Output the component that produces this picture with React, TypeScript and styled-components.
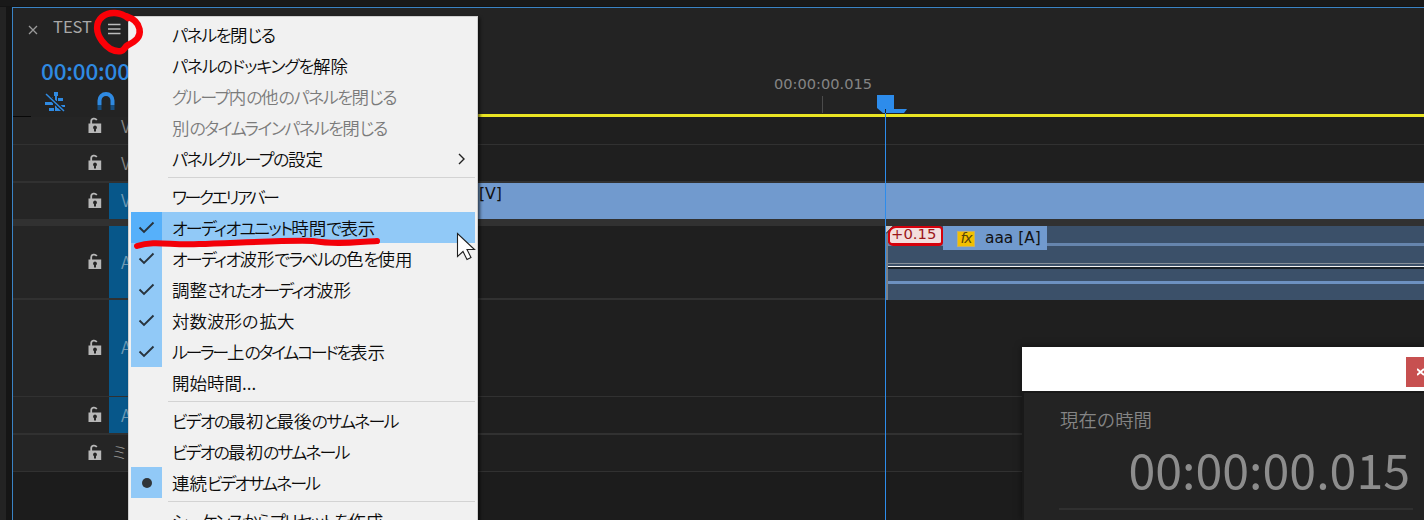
import React from "react";
import styled, { createGlobalStyle } from "styled-components";

const Global = createGlobalStyle`
  *{box-sizing:border-box}
  html,body{margin:0;background:#1c1c1c}
  body{width:1424px;height:520px;overflow:hidden;font-family:"Noto Sans CJK JP",sans-serif}
  svg{display:block}
`;

const Shell = styled.div`
  position: relative; width: 1424px; height: 520px; overflow: hidden;
  display: flex; flex-direction: column; background: #151515;
`;
const TopBar = styled.div`
  height: 7px; flex: none; padding-left: 7px; background: #191919; border-bottom: 1px solid #141414;
`;
const Body = styled.div`flex: 1; display: flex; min-height: 0;`;
const SideStrip = styled.div`width: 6px; margin-right: 6px; background: #232323;`;
const Panel = styled.main`
  position: relative; flex: 1; min-width: 0; display: flex; flex-direction: column;
  border: solid #3a83c4; border-width: 1px 0 0 1px; background: #1c1c1c;
`;
const PanelHead = styled.header`height: 109px; flex: none; display: flex; background: #232323;`;
const HeadLeft = styled.div`width: 465px; padding-left: 15px; display: flex; flex-direction: column;`;
const HeadEdge = styled.i`width: 18px; height: 1px; margin: auto 0 0 -15px; background: #080808;`;
const TabRow = styled.div`
  display: flex; align-items: center; height: 42px; color: #a8a8a8;
  svg:first-child{margin-top:1px}
`;
const TabName = styled.span`
  margin: -6px 0 0 15px; width: 55px; font: 16.5px/22px "Noto Sans CJK JP", sans-serif;
`;
const Timecode = styled.div`
  margin: 6px 0 0 13px; height: 28px; color: #2f8ae2; font: 500 22.5px/28px "Noto Sans CJK JP", sans-serif;
  letter-spacing: -0.2px;
`;
const Tools = styled.div`display: flex; gap: 30px; padding: 7px 0 0 15px;`;
const Ruler = styled.div`flex: 1; display: flex; flex-direction: column; align-items: flex-start;`;
const RulerTime = styled.span`
  margin: 66px 0 0 296px; width: 102px; color: #858585; font: 14.6px/20px "DejaVu Sans", sans-serif;
`;
const Tick = styled.i`width: 1px; height: 17px; margin: 2px 0 0 344px; background: #4b4b4b;`;
const WorkBar = styled.div`
  height: 3px; flex: none; margin: -3px 0 0 465px; background: #e9e423; z-index: 1;
`;
const Track = styled.div<{ $h: number; $line: number }>`
  height: ${p => p.$h}px; flex: none; display: flex;
  border-bottom: ${p => p.$line}px solid #313131;
`;
const TrackHead = styled.div<{ $lift: number }>`
  width: 465px; flex: none; padding: 0 0 ${p => p.$lift}px 75px; display: flex; align-items: center; background: #252525;
`;
const Target = styled.div<{ $on?: boolean; $lift: number }>`
  width: 80px; align-self: stretch; margin: 0 0 -${p => p.$lift}px 7px; padding: 0 0 ${p => p.$lift}px 12px;
  display: flex; align-items: center;
  color: ${p => (p.$on ? "#6f9bb5" : "#858585")}; background: ${p => (p.$on ? "#07578a" : "none")};
  font: 350 17px "Noto Sans CJK JP", sans-serif;
`;
const MixName = styled.span`margin-left: 9px; color: #999; font: 300 17px "Noto Sans CJK JP", sans-serif;`;
const Lane = styled.div`flex: 1; display: flex; background: #1f1f1f; min-width: 0;`;
const VideoClip = styled.div`
  flex: 1; background: #719ace; color: #111; padding-left: 1px; font: 15.7px/22px "DejaVu Sans", sans-serif;
`;
const AudioClip = styled.div`
  flex: 1; margin-left: 408px; height: 74px; display: flex; flex-direction: column; background: #3b5069;
  border-left: 2px solid #78818b; position: relative;
`;
const Wave = styled.i<{ $top: number; $h: number; $c: string }>`
  display: block; height: ${p => p.$h}px; margin-top: ${p => p.$top}px; background: ${p => p.$c};
`;
const ClipTags = styled.div`
  position: absolute; left: 0; top: 0; display: flex; font: 15px/22px "DejaVu Sans", sans-serif;
`;
const Offset = styled.span`
  width: 55px; height: 20px; border: 2px solid #d5000b; border-bottom-width: 3px; border-radius: 8px 4px 4px 5px;
  background: #f3dedd; color: #9c1719; font-size: 14.8px; line-height: 12px; padding-left: 1px;
`;
const ClipName = styled.span`
  width: 104px; height: 24px; display: flex; align-items: center; padding: 0 0 1px 14px; gap: 10px;
  background: #719ace; color: #111; font-size: 15.4px;
`;
const Fx = styled.b`
  width: 18px; height: 16px; margin-top: 3px; border: 1px solid #c3b169; background: #f2c000; color: #55430b;
  font: italic 14px/12px "DejaVu Sans", sans-serif; text-align: center; letter-spacing: -1px;
`;
const Fold = styled.svg`position: absolute; left: -2px; top: 0;`;
const Playhead = styled.svg`position: absolute; left: 863px; top: 87px; z-index: 2;`;

const Menu = styled.div`
  position: absolute; left: 128px; top: 16px; width: 350px; height: 520px; z-index: 3;
  padding: 2px 2px 0; background: #f1f1f1; border: 1px solid #cfcfcf;
  box-shadow: 2px 2px 3px rgba(0,0,0,.6);
`;
const Item = styled.div<{ $active?: boolean; $off?: boolean }>`
  height: 31px; display: flex; align-items: center;
  background: ${p => (p.$active ? "#91c9f7" : "none")}; color: ${p => (p.$off ? "#7b7b7b" : "#0b0b0b")};
`;
const Mark = styled.span<{ $on?: boolean; $active?: boolean }>`
  width: 31px; height: 31px; flex: none; display: grid; place-items: center;
  background: ${p => (p.$active ? "#56b0fa" : p.$on ? "#91c9f7" : "none")};
`;
const Label = styled.span<{ $kern: number }>`
  flex: 1; margin-left: 10px; white-space: nowrap; font-size: 17.5px; line-height: 31px; font-weight: 350;
  padding-bottom: 1px;
  .kana { font-size: 17px; font-feature-settings: "palt"; letter-spacing: ${p => p.$kern}px; }
`;
const Divider = styled.div`height: 1px; margin: 3px 0 3px 37px; background: #d3d3d3;`;

const Dialog = styled.section`
  position: absolute; left: 1022px; top: 347px; width: 402px; height: 173px; z-index: 4;
  background: #232323; box-shadow: 0 0 7px rgba(0,0,0,.5);
`;
const TitleBar = styled.div`
  height: 44px; display: flex; justify-content: flex-end; align-items: center; padding-top: 6px; background: #fff;
`;
const CloseBox = styled.div`width: 18px; height: 30px; overflow: hidden; padding: 11px 0 0 11px; background: #c75050;`;
const DialogBody = styled.div`
  height: 129px; border: solid #191919; border-width: 2px 0 0 2px; padding: 14px 11px 0 35px;
`;
const Caption = styled.div`padding-left: 1px; color: #858585; font-size: 18.4px; line-height: 24px; font-weight: 350;`;
const BigTime = styled.div`
  height: 79px; padding: 7px 3px 0 0; text-align: right; white-space: nowrap; color: #8d8d8d;
  font-size: 48.3px; line-height: 60px; font-weight: 400; border-bottom: 2px solid #303030;
`;
const Overlay = styled.svg`position: absolute; left: 0; top: 0; z-index: 5; pointer-events: none;`;

const Lock = () => (
  <svg width="14" height="18" viewBox="0 0 14 18">
    <path d="M3.2 8V5.2C3.2 2.4 7 1.6 8.8 4" fill="none" stroke="#b7b7b7" strokeWidth="1.8" />
    <path fill="#b7b7b7" fillRule="evenodd" d="M.5 7.500h12.700V17H.5zM7 9.500a2 2 0 0 0-1 3.700V15.500h2V13.200a2 2 0 0 0-1-3.700z" />
  </svg>
);
const Snap = () => (
  <svg width="24" height="22" viewBox="0 0 24 22" fill="#2f8ae2">
    <path d="M11 1h4v4h-1v5h-2V5h-1zM6 6h4v3H6zM15 7h5v3h-5zM2 11h8v3H2zM17 14h5v2h-5zM6 17h5v3H6zM12 13h2v7h-2zM14 17h4v3h-4z" />
    <path d="M3 3l18 17" stroke="#232323" strokeWidth="4" />
    <path d="M3 3l18 17" stroke="#2f8ae2" strokeWidth="1.500" />
  </svg>
);
const Magnet = () => (
  <svg width="18" height="20" viewBox="0 0 18 20" fill="none" strokeWidth="4">
    <path d="M2.500 14V9.500a6.500 6.500 0 0 1 13 0V14" stroke="#2f8ae2" />
    <path d="M2.500 14v5M15.500 14v5" stroke="#174e80" />
  </svg>
);
const Check = () => (
  <svg width="17" height="13" viewBox="0 0 17 13"><path d="M1.500 6.500l4.500 4.500L15.500 1.500" fill="none" stroke="#28333d" strokeWidth="1.900" /></svg>
);

type Entry = { text: string; kern?: number; mark?: "check" | "dot"; off?: boolean; active?: boolean; sub?: boolean };
const groups: Entry[][] = [
  [
    { text: "パネルを閉じる", kern: -1.5 },
    { text: "パネルのドッキングを解除", kern: -1.2 },
    { text: "グループ内の他のパネルを閉じる", kern: -1.5, off: true },
    { text: "別のタイムラインパネルを閉じる", kern: -1.55, off: true },
    { text: "パネルグループの設定", kern: -1.4, sub: true },
  ],
  [
    { text: "ワークエリアバー", kern: -2.5 },
    { text: "オーディオユニット時間で表示", kern: -1.7, mark: "check", active: true },
    { text: "オーディオ波形でラベルの色を使用", kern: -1.7, mark: "check" },
    { text: "調整されたオーディオ波形", kern: -1.9, mark: "check" },
    { text: "対数波形の拡大", kern: 1, mark: "check" },
    { text: "ルーラー上のタイムコードを表示", kern: -2.3, mark: "check" },
    { text: "開始時間..." },
  ],
  [
    { text: "ビデオの最初と最後のサムネール", kern: -1.8 },
    { text: "ビデオの最初のサムネール", kern: -1.9 },
    { text: "連続ビデオサムネール", kern: -1.95, mark: "dot" },
  ],
  [{ text: "シーケンスからプリセットを作成", kern: -1.6 }],
];

const MenuItem = ({ e }: { e: Entry }) => (
  <Item $active={e.active} $off={e.off}>
    <Mark $on={!!e.mark} $active={e.active}>
      {e.mark === "check" && <Check />}
      {e.mark === "dot" && <svg width="10" height="10"><circle cx="5" cy="5" r="5" fill="#303539" /></svg>}
    </Mark>
    <Label $kern={e.kern ?? -1}>
      {e.text.split(/([\u3040-\u30ff]+)/).map((run, i) => (i % 2 ? <span className="kana" key={i}>{run}</span> : run))}
    </Label>
    {e.sub && (
      <svg width="18" height="12" viewBox="0 0 18 12"><path d="M2 1l5 5-5 5" fill="none" stroke="#222" strokeWidth="1.400" /></svg>
    )}
  </Item>
);

type TrackProps = { h: number; line: number; name: string; on?: boolean; mix?: boolean; lift?: number; children?: React.ReactNode };
const TrackRow = ({ h, line, name, on, mix, lift = 2, children }: TrackProps) => (
  <Track $h={h} $line={line}>
    <TrackHead $lift={lift}>
      <Lock />
      {mix ? <MixName>{name}</MixName> : <Target $on={on} $lift={lift}>{name}</Target>}
    </TrackHead>
    <Lane>{children}</Lane>
  </Track>
);

export default function App() {
  return (
    <Shell>
      <Global />
      <TopBar />
      <Body>
        <SideStrip />
        <Panel>
          <PanelHead>
            <HeadLeft>
              <TabRow>
                <svg width="10" height="10" viewBox="0 0 10 10"><path d="M1 1l8 8M9 1L1 9" stroke="#9a9a9a" strokeWidth="1.300" /></svg>
                <TabName>TEST</TabName>
                <svg width="13" height="12" viewBox="0 0 13 12"><path d="M0 1.500h12.500M0 6h12.500M0 10.500h12.500" stroke="#bcbcbc" strokeWidth="1.300" /></svg>
              </TabRow>
              <Timecode>00:00:00.015</Timecode>
              <Tools><Snap /><Magnet /></Tools>
              <HeadEdge />
            </HeadLeft>
            <Ruler><RulerTime>00:00:00.015</RulerTime><Tick /></Ruler>
          </PanelHead>
          <WorkBar />
          <TrackRow h={28} line={1} name="V" lift={11} />
          <TrackRow h={38} line={2} name="V" />
          <TrackRow h={43} line={7} name="V" on lift={3}><VideoClip>[V]</VideoClip></TrackRow>
          <TrackRow h={74} line={2} name="A" on>
            <AudioClip>
              <Wave $top={17} $h={3} $c="#6685ad" />
              <Wave $top={17} $h={1} $c="#87909a" />
              <Wave $top={2} $h={1} $c="#f4f4f4" />
              <Wave $top={0} $h={2} $c="#192129" />
              <Wave $top={12} $h={3} $c="#6d91c1" />
              <Fold width="8" height="8"><path d="M0 0h7L0 7z" fill="#c9c9c9" /><path d="M7.500 0L0 7.500" stroke="#222" /></Fold>
              <ClipTags><Offset>+0.15</Offset><ClipName><Fx>fx</Fx>aaa [A]</ClipName></ClipTags>
            </AudioClip>
          </TrackRow>
          <TrackRow h={97} line={1} name="A" on lift={3} />
          <TrackRow h={38} line={2} name="A" on />
          <TrackRow h={37} line={1} name="ミ" mix lift={3} />
          <Playhead width="32" height="430">
            <path d="M1 0h17v14h13l-3 4H7L1 13z" fill="#2d8ceb" />
            <rect x="9" y="14" width="1" height="4" fill="#14212d" />
            <rect x="9" y="18" width="1" height="412" fill="#2d8ceb" />
          </Playhead>
        </Panel>
      </Body>

      <Menu>
        {groups.map((g, i) => (
          <React.Fragment key={i}>
            {i > 0 && <Divider />}
            {g.map(e => <MenuItem e={e} key={e.text} />)}
          </React.Fragment>
        ))}
      </Menu>

      <Dialog>
        <TitleBar>
          <CloseBox><svg width="8" height="8"><path d="M0 1l7 6M7 1L0 7" stroke="#fff" strokeWidth="2" /></svg></CloseBox>
        </TitleBar>
        <DialogBody>
          <Caption>現在の時間</Caption>
          <BigTime>00:00:00.015</BigTime>
        </DialogBody>
      </Dialog>

      <Overlay width="1424" height="520" fill="none">
        <path d="M128 18C121 12 109 11 102 17C95 23 96 33 102 41C108 49 114 52 121 51C125 50 124 47 128 45C136 41 141 37 139.500 29C138 21 132 18 126 16" stroke="#fb0007" strokeWidth="6.500" strokeLinecap="round" />
        <path d="M137 246C155 240 173 246 199 244C235 243 285 240 313 241C336 245 357 242 377 241" stroke="#f30009" strokeWidth="6" strokeLinecap="round" />
        <path d="M457.500 233.500v23l5.500-5 4 8 4-2-4-8h7.500z" fill="#fff" stroke="#202020" strokeWidth="1.100" />
      </Overlay>
    </Shell>
  );
}
